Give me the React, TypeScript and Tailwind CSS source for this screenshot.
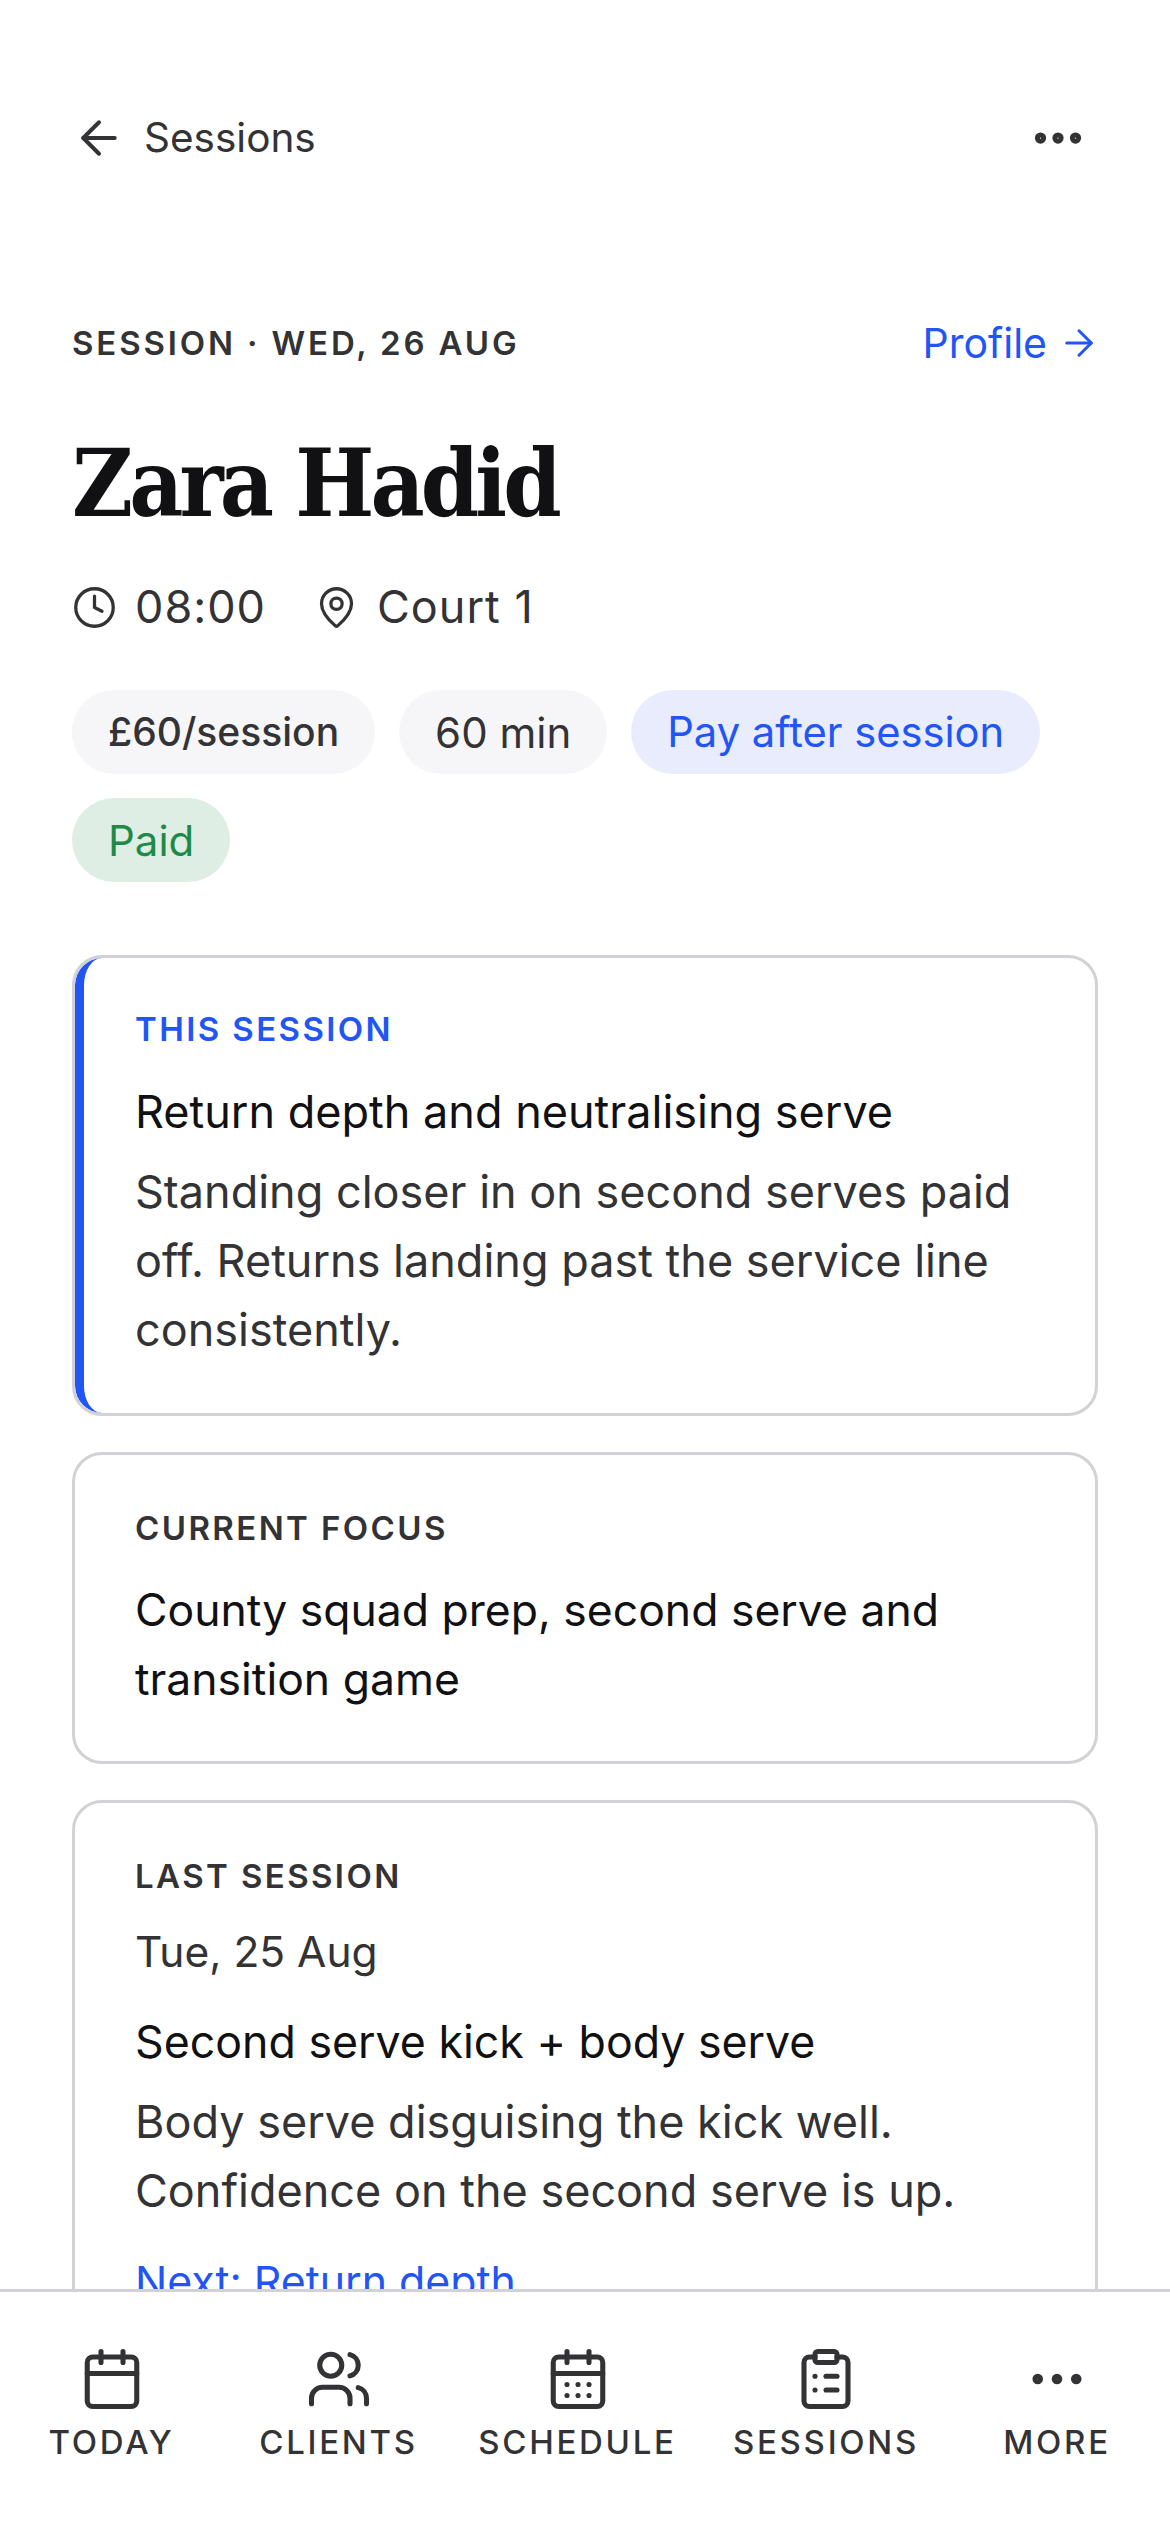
import { ArrowLeft, ArrowRight, Calendar, CalendarDays, ClipboardList, Clock, Ellipsis, MapPin, Users } from "lucide-react";

const navItems = [
  { label: "TODAY", icon: Calendar, width: "w-[223px]" },
  { label: "CLIENTS", icon: Users, width: "w-[231px]" },
  { label: "SCHEDULE", icon: CalendarDays, width: "w-[247px]" },
  { label: "SESSIONS", icon: ClipboardList, width: "w-[250px]" },
  { label: "MORE", icon: Ellipsis, width: "w-[212px]" },
];

function Chip({ className, children }: { className: string; children: React.ReactNode }) {
  return <span className={`flex h-[84px] items-center rounded-full px-[36px] ${className}`}>{children}</span>;
}

function Eyebrow({ className = "text-[#333336]", children }: { className?: string; children: React.ReactNode }) {
  return <p className={`text-[33px] leading-[40px] font-semibold tracking-[2.4px] ${className}`}>{children}</p>;
}

export default function App() {
  return (
    <div className="flex h-[2532px] w-[1170px] flex-col overflow-hidden bg-white font-['Inter',sans-serif] text-[#111113]">
      <main className="min-h-0 flex-1 overflow-hidden px-[72px]">
        {/* Top bar */}
        <div className="flex h-[313px] items-start justify-between pt-[108px]">
          <div className="flex items-center gap-[18px] text-[#333336]">
            <ArrowLeft className="h-[54px] w-[54px]" strokeWidth={1.75} />
            <span className="text-[40.5px] leading-[60px]">Sessions</span>
          </div>
          <Ellipsis className="mr-[10px] h-[60px] w-[60px] text-[#333336]" strokeWidth={2.5} />
        </div>

        {/* Header */}
        <div className="flex items-center justify-between">
          <Eyebrow className="tracking-[2.85px] text-[#333336]">SESSION · WED, 26 AUG</Eyebrow>
          <div className="mr-[-2px] flex items-center gap-[11px] text-[#2155f5]">
            <span className="text-[41px] leading-[60px]">Profile</span>
            <ArrowRight className="h-[42px] w-[42px]" strokeWidth={1.75} />
          </div>
        </div>
        <h1 className="mt-[49px] font-['DejaVu_Serif_Condensed','DejaVu_Serif',serif] text-[93px] leading-[124px] font-bold tracking-[-3.9px] text-[#111113]">Zara Hadid</h1>
        <div className="mt-[31px] flex items-center text-[45px] leading-[60px] tracking-[1px] text-[#333336]">
          <Clock className="h-[45px] w-[45px]" strokeWidth={1.75} />
          <span className="ml-[18px]">08:00</span>
          <MapPin className="ml-[48px] h-[45px] w-[45px]" strokeWidth={1.75} />
          <span className="ml-[18px]">Court 1</span>
        </div>

        {/* Chips */}
        <div className="mt-[53px] flex flex-wrap gap-x-[24px] gap-y-[24px]">
          <Chip className="bg-[#f6f6f8] text-[39px] font-medium text-[#333336]">£60/session</Chip>
          <Chip className="bg-[#f6f6f8] text-[42px] text-[#333336]">60 min</Chip>
          <Chip className="bg-[#e8ecfd] text-[41.7px] text-[#2155f5]">Pay after session</Chip>
          <Chip className="bg-[#deeee4] text-[42px] text-[#1e8a47]">Paid</Chip>
        </div>

        {/* Cards */}
        <section className="mt-[73px] overflow-hidden rounded-[30px] border-[3px] border-[#d1d1d6]">
          <div className="rounded-[27px] border-l-[9px] border-[#2155f5] pt-[51px] pr-[60px] pb-[49px] pl-[51px]">
            <Eyebrow className="text-[#2155f5]">THIS SESSION</Eyebrow>
            <p className="mt-[33px] text-[45px] leading-[60px] text-[#111113]">Return depth and neutralising serve</p>
            <p className="mt-[15px] text-[45px] leading-[69px] text-[#333336]">
              Standing closer in on second serves paid off. Returns landing past the service line consistently.
            </p>
          </div>
        </section>
        <section className="mt-[36px] rounded-[30px] border-[3px] border-[#d1d1d6] pt-[53px] pr-[60px] pb-[47px] pl-[60px]">
          <Eyebrow>CURRENT FOCUS</Eyebrow>
          <p className="mt-[28px] text-[44.5px] leading-[69px] text-[#111113]">County squad prep, second serve and transition game</p>
        </section>
        <section className="mt-[36px] rounded-[30px] border-[3px] border-[#d1d1d6] pt-[53px] pr-[60px] pb-[36px] pl-[60px]">
          <Eyebrow>LAST SESSION</Eyebrow>
          <p className="mt-[26px] text-[42.5px] leading-[60px] text-[#333336]">Tue, 25 Aug</p>
          <p className="mt-[30px] text-[44.7px] leading-[60px] text-[#111113]">Second serve kick + body serve</p>
          <p className="mt-[15px] text-[45px] leading-[69px] text-[#333336]">
            Body serve disguising the kick well. Confidence on the second serve is up.
          </p>
          <p className="mt-[27px] text-[42.8px] leading-[60px] text-[#2155f5]">Next: Return depth</p>
        </section>
      </main>

      {/* Bottom nav */}
      <nav className="flex h-[243px] shrink-0 items-start border-t-[3px] border-[#d1d1d6] bg-white pt-[54px]">
        {navItems.map(({ label, icon: Icon, width }) => (
          <div key={label} className={`flex flex-col items-center gap-[10px] text-[#333336] ${width}`}>
            <Icon className="h-[66px] w-[66px]" strokeWidth={1.85} />
            <span className="text-[33px] leading-[40px] font-medium tracking-[2.7px]">{label}</span>
          </div>
        ))}
      </nav>
    </div>
  );
}
